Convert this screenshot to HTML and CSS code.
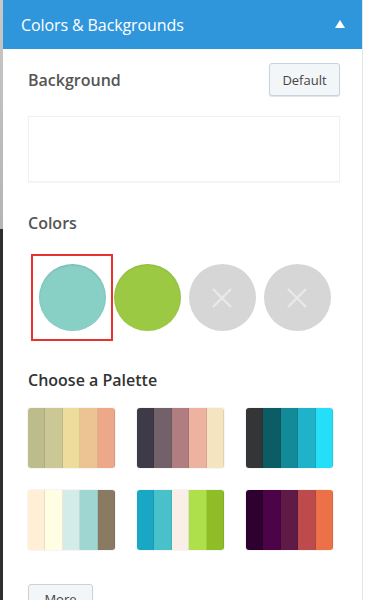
FILE: index.html
```html
<!DOCTYPE html>
<html>
<head>
<meta charset="utf-8">
<link rel="stylesheet" href="styles.css">
</head>
<body>
<div class="frame">
  <div class="edge"><div class="edge-top"></div><div class="edge-bottom"></div></div>
  <div class="panel">
    <div class="header">
      <span class="title">Colors &amp; Backgrounds</span>
      <svg class="caret" width="10" height="8" viewBox="0 0 10 8"><path d="M0 8 L5 0 L10 8 Z" fill="#fff"/></svg>
    </div>
    <div class="body">
      <div class="row-head">
        <h2 class="label">Background</h2>
        <button class="btn">Default</button>
      </div>
      <div class="bg-box"></div>
      <h2 class="label colors-label">Colors</h2>
      <div class="swatches">
        <div class="swatch-wrap selected"><div class="swatch teal"></div></div>
        <div class="swatch-wrap"><div class="swatch green"></div></div>
        <div class="swatch-wrap"><div class="swatch empty"><svg width="22" height="22" viewBox="0 0 22 22"><path d="M2 2 L20 20 M20 2 L2 20" stroke="#e9e9e9" stroke-width="2.4"/></svg></div></div>
        <div class="swatch-wrap"><div class="swatch empty"><svg width="22" height="22" viewBox="0 0 22 22"><path d="M2 2 L20 20 M20 2 L2 20" stroke="#e9e9e9" stroke-width="2.4"/></svg></div></div>
      </div>
      <h2 class="label palette-label">Choose a Palette</h2>
      <div class="palettes">
        <div class="palette"><span class="s" style="background:#bdbc8c"></span><span class="s" style="background:#cbc896"></span><span class="s" style="background:#eddc9b"></span><span class="s" style="background:#ecc494"></span><span class="s" style="background:#eca888"></span></div>
        <div class="palette"><span class="s" style="background:#3f3a47"></span><span class="s" style="background:#726169"></span><span class="s" style="background:#b07d80"></span><span class="s" style="background:#eeb2a0"></span><span class="s" style="background:#f5e4c0"></span></div>
        <div class="palette"><span class="s" style="background:#333537"></span><span class="s" style="background:#0c5c66"></span><span class="s" style="background:#138a98"></span><span class="s" style="background:#1fb2c8"></span><span class="s" style="background:#25dff8"></span></div>
        <div class="palette"><span class="s" style="background:#ffefd6"></span><span class="s" style="background:#fffde3"></span><span class="s" style="background:#d3ecea"></span><span class="s" style="background:#a0d6d2"></span><span class="s" style="background:#8a7a62"></span></div>
        <div class="palette"><span class="s" style="background:#1aa7c3"></span><span class="s" style="background:#48c1ca"></span><span class="s" style="background:#f8f0e7"></span><span class="s" style="background:#ade04a"></span><span class="s" style="background:#8fbd27"></span></div>
        <div class="palette"><span class="s" style="background:#2d0030"></span><span class="s" style="background:#4b0448"></span><span class="s" style="background:#5f1a45"></span><span class="s" style="background:#be4b4c"></span><span class="s" style="background:#ec7149"></span></div>
      </div>
      <button class="btn more">More</button>
    </div>
  </div>
  <div class="rside"></div>
</div>
</body>
</html>
```
FILE: styles.css
```css
* { box-sizing: border-box; }
html, body { margin: 0; padding: 0; background: #fff; }
body { font-family: "Open Sans", "Liberation Sans", sans-serif; width: 368px; height: 600px; overflow: hidden; }
.frame { display: flex; height: 600px; }
.edge { width: 3px; display: flex; flex-direction: column; flex: none; }
.edge-top { height: 229px; background: linear-gradient(#c8c8c8, #b4b4b4); }
.edge-bottom { flex: 1; background: #2e2e2e; }
.panel { width: 360px; flex: none; border-right: 1px solid #e3e6e8; }
.rside { flex: 1; background: #fff; }
.header { height: 49px; background: #3096dc; display: flex; align-items: center; justify-content: space-between; padding: 0 17px 0 18px; }
.title { color: #fff; font-size: 16px; font-weight: 400; letter-spacing: -0.1px; }
.caret { margin-top: -2px; }
.body { padding: 14px 22px 0 25px; }
.row-head { display: flex; justify-content: space-between; align-items: center; height: 33px; }
.label { margin: 0; font-size: 16px; font-weight: 600; color: #555; }
.btn { font-family: inherit; font-size: 13px; color: #444; background: #f3f6f8; border: 1px solid #c9d3da; border-radius: 3px; box-shadow: 0 1px 1px rgba(0,0,0,0.12); padding: 0; width: 71px; height: 33px; }
.bg-box { margin-top: 20px; height: 66px; border: 1px solid #f1f1f1; box-shadow: 0 1px 1px rgba(0,0,0,0.03); }
.colors-label { margin-top: 30px; line-height: 22px; }
.swatches { display: flex; margin-top: 20px; margin-left: 3px; }
.swatch-wrap { width: 82px; height: 87px; border: 2px solid transparent; display: flex; align-items: center; justify-content: center; margin-right: -7px; }
.swatch-wrap.selected { border-color: #e8322e; }
.swatch { width: 67px; height: 67px; border-radius: 50%; display: flex; align-items: center; justify-content: center; }
.teal { background: #88cfc6; box-shadow: inset 0 1px 2px rgba(0,0,0,0.12); }
.green { background: #9bc943; box-shadow: inset 0 1px 2px rgba(0,0,0,0.08); }
.empty { background: #d6d6d6; }
.palette-label { margin-top: 28px; line-height: 22px; color: #333; }
.palettes { display: grid; grid-template-columns: repeat(3, 87px); column-gap: 22px; row-gap: 22px; margin-top: 17px; }
.palette { display: flex; height: 60px; border-radius: 3px; overflow: hidden; box-shadow: 0 0 0 1px rgba(0,0,0,0.04); }
.s { flex: 1; box-shadow: inset -1px 0 0 rgba(0,0,0,0.08); }
.more { margin-top: 34px; width: 65px; height: 30px; }
```
